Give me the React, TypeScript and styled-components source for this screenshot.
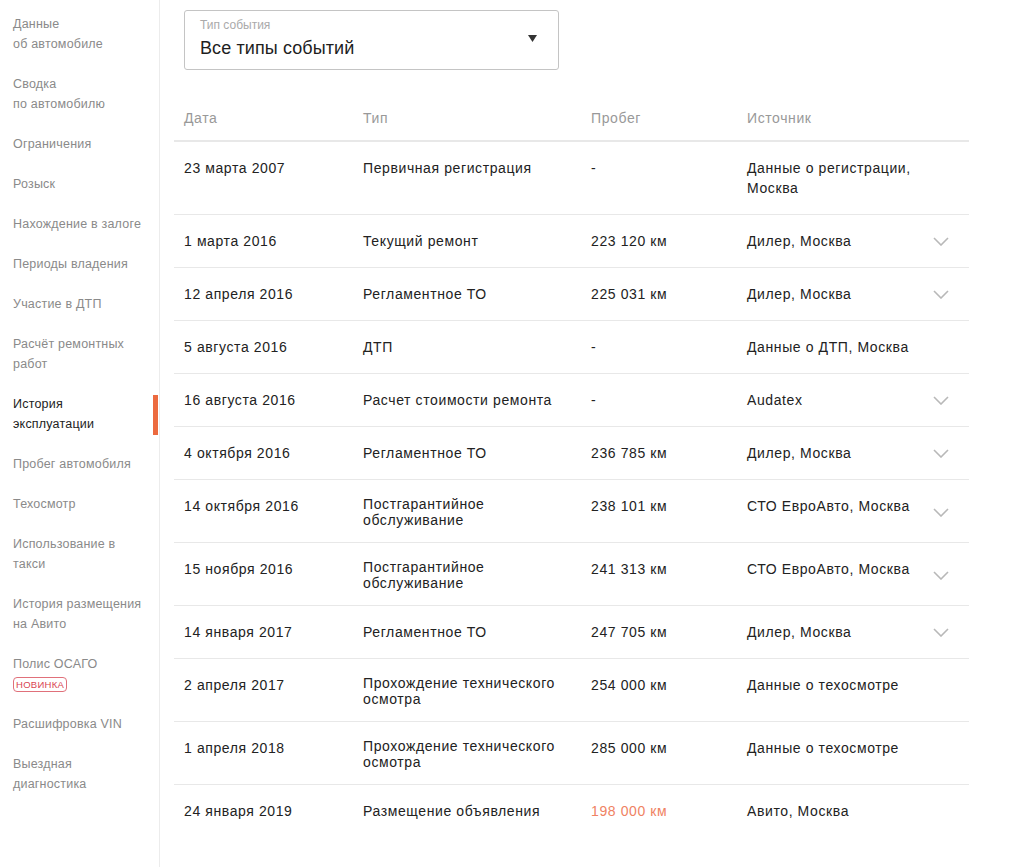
import React from "react";
import styled, {createGlobalStyle} from "styled-components";

const GlobalStyle = createGlobalStyle`
  html, body {
    margin: 0;
    padding: 0;
    background: #fff;
  }

  body {
    font-family: "Liberation Sans", Arial, sans-serif;
    color: #222;
  }
`

const Layout = styled.div`
  display: flex;
  min-height: 867px;
`

const Sidebar = styled.nav`
  width: 160px;
  flex-shrink: 0;
  border-right: 1px solid #ececec;
  padding: 14px 0 0;
  box-sizing: border-box;
  display: flex;
  flex-direction: column;
  gap: 20px;
`

const NavItem = styled.div<{ $active?: boolean }>`
  position: relative;
  padding: 0 10px 0 13px;
  font-size: 12.5px;
  line-height: 20px;
  letter-spacing: 0.2px;
  color: ${p => p.$active ? "#222" : "#8a8a8a"};

  &::after {
    content: "";
    display: ${p => p.$active ? "block" : "none"};
    position: absolute;
    right: 1px;
    top: 1px;
    width: 5px;
    height: 40px;
    background: #ec6a3f;
  }
`

const Badge = styled.span`
  display: inline-block;
  border: 1px solid #e0707a;
  border-radius: 4px;
  color: #d94452;
  font-size: 9.5px;
  line-height: 13px;
  padding: 0 2px;
  letter-spacing: 0.3px;
`

const Main = styled.main`
  flex: 1;
  padding: 10px 50px 0 14px;
`

const SelectBox = styled.div`
  margin-left: 10px;
  width: 375px;
  height: 60px;
  box-sizing: border-box;
  border: 1px solid #c4c4c4;
  border-radius: 3px;
  padding: 7px 21px 0 15px;
  display: flex;
  justify-content: space-between;
`

const SelectText = styled.div`
  display: flex;
  flex-direction: column;
`

const SelectLabel = styled.span`
  font-size: 12px;
  line-height: 14px;
  color: #aaa;
`

const SelectValue = styled.span`
  font-size: 18px;
  line-height: 24px;
  color: #1e1e1e;
  margin-top: 4px;
  letter-spacing: 0.1px;
`

const CaretBox = styled.div`
  display: flex;
  align-items: flex-start;
  padding-top: 17px;
`

const Table = styled.div`
  margin-top: 38px;
  width: 795px;
`

const Row = styled.div<{ $head?: boolean; $tight?: boolean; $last?: boolean }>`
  display: grid;
  grid-template-columns: 179px 228px 156px 1fr 16px;
  padding: ${p => p.$head ? "0 20px 12px 10px" : p.$tight ? "16px 20px 14px 10px" : "16px 20px 16px 10px"};
  border-bottom: ${p => p.$last ? "none" : p.$head ? "2px solid #e8e8e8" : "1px solid #e8e8e8"};
  font-size: 14px;
  line-height: 20px;
  letter-spacing: 0.6px;
  color: ${p => p.$head ? "#999" : "#222"};
`

const TypeCell = styled.div<{ $multi?: boolean }>`
  padding-right: 14px;
  line-height: ${p => p.$multi ? "16px" : "20px"};
`

const Mileage = styled.div<{ $accent?: boolean }>`
  color: ${p => p.$accent ? "#ef8263" : "inherit"};
`

const ChevronCell = styled.div`
  align-self: center;
  display: flex;
  color: #b8b8b8;
`

const Chevron = () => (
    <svg width="16" height="9" viewBox="0 0 16 9" fill="none">
        <path d="M1 1l7 7 7-7" stroke="currentColor" strokeWidth="1.6"/>
    </svg>
)

const Caret = () => (
    <svg width="9" height="7" viewBox="0 0 9 7">
        <path d="M0 0h9L4.5 7z" fill="#333"/>
    </svg>
)

const navItems: { text: React.ReactNode; active?: boolean }[] = [
    {text: <>Данные<br/>об автомобиле</>},
    {text: <>Сводка<br/>по автомобилю</>},
    {text: "Ограничения"},
    {text: "Розыск"},
    {text: "Нахождение в залоге"},
    {text: "Периоды владения"},
    {text: "Участие в ДТП"},
    {text: <>Расчёт ремонтных<br/>работ</>},
    {text: <>История<br/>эксплуатации</>, active: true},
    {text: "Пробег автомобиля"},
    {text: "Техосмотр"},
    {text: <>Использование в<br/>такси</>},
    {text: <>История размещения<br/>на Авито</>},
    {text: <>Полис ОСАГО<br/><Badge>НОВИНКА</Badge></>},
    {text: "Расшифровка VIN"},
    {text: <>Выездная<br/>диагностика</>},
]

interface Event {
    date: string
    type: string
    multi?: boolean
    mileage: string
    accent?: boolean
    source: string
    more?: boolean
}

const events: Event[] = [
    {date: "23 марта 2007", type: "Первичная регистрация", mileage: "-", source: "Данные о регистрации, Москва"},
    {date: "1 марта 2016", type: "Текущий ремонт", mileage: "223 120 км", source: "Дилер, Москва", more: true},
    {date: "12 апреля 2016", type: "Регламентное ТО", mileage: "225 031 км", source: "Дилер, Москва", more: true},
    {date: "5 августа 2016", type: "ДТП", mileage: "-", source: "Данные о ДТП, Москва"},
    {date: "16 августа 2016", type: "Расчет стоимости ремонта", mileage: "-", source: "Audatex", more: true},
    {date: "4 октября 2016", type: "Регламентное ТО", mileage: "236 785 км", source: "Дилер, Москва", more: true},
    {date: "14 октября 2016", type: "Постгарантийное обслуживание", multi: true, mileage: "238 101 км", source: "СТО ЕвроАвто, Москва", more: true},
    {date: "15 ноября 2016", type: "Постгарантийное обслуживание", multi: true, mileage: "241 313 км", source: "СТО ЕвроАвто, Москва", more: true},
    {date: "14 января 2017", type: "Регламентное ТО", mileage: "247 705 км", source: "Дилер, Москва", more: true},
    {date: "2 апреля 2017", type: "Прохождение технического осмотра", multi: true, mileage: "254 000 км", source: "Данные о техосмотре"},
    {date: "1 апреля 2018", type: "Прохождение технического осмотра", multi: true, mileage: "285 000 км", source: "Данные о техосмотре"},
    {date: "24 января 2019", type: "Размещение объявления", mileage: "198 000 км", accent: true, source: "Авито, Москва"},
]

const App: React.FC = () => {
    return <>
        <GlobalStyle/>
        <Layout>
            <Sidebar>
                {navItems.map((item, i) => (
                    <NavItem key={i} $active={item.active}>{item.text}</NavItem>
                ))}
            </Sidebar>

            <Main>
                <SelectBox>
                    <SelectText>
                        <SelectLabel>Тип события</SelectLabel>
                        <SelectValue>Все типы событий</SelectValue>
                    </SelectText>
                    <CaretBox><Caret/></CaretBox>
                </SelectBox>

                <Table>
                    <Row $head>
                        <div>Дата</div>
                        <div>Тип</div>
                        <div>Пробег</div>
                        <div>Источник</div>
                        <div/>
                    </Row>
                    {events.map((ev, i) => (
                        <Row key={i} $tight={ev.multi} $last={i === events.length - 1}>
                            <div>{ev.date}</div>
                            <TypeCell $multi={ev.multi}>{ev.type}</TypeCell>
                            <Mileage $accent={ev.accent}>{ev.mileage}</Mileage>
                            <div>{ev.source}</div>
                            <ChevronCell>{ev.more && <Chevron/>}</ChevronCell>
                        </Row>
                    ))}
                </Table>
            </Main>
        </Layout>
    </>
}

export default App;
